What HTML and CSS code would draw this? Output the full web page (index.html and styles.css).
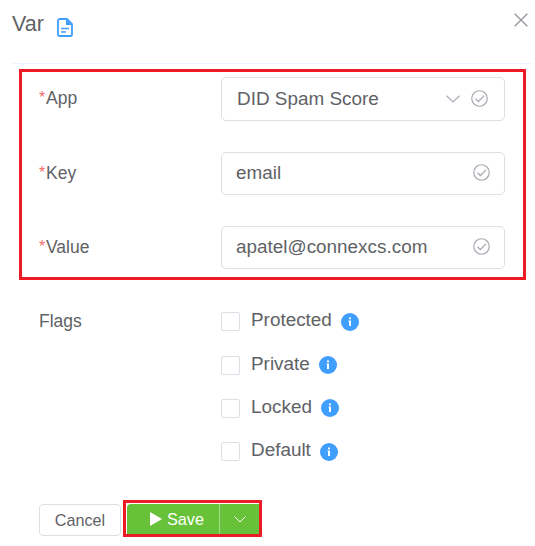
FILE: index.html
```html
<!DOCTYPE html>
<html lang="en">
<head>
<meta charset="utf-8">
<title>Var</title>
<link rel="stylesheet" href="styles.css">
</head>
<body>
<svg class="defs" width="0" height="0">
  <symbol id="check" viewBox="0 0 18 18"><g fill="none" stroke="#a8abb2" stroke-width="1.3"><circle cx="9" cy="9" r="8.2"/><path d="M4.7 9.200 7.800 12.200l6-6"/></g></symbol>
  <symbol id="info" viewBox="0 0 18 18"><circle cx="9" cy="9" r="9" fill="#409eff"/><path fill="#fff" d="M8 4.400h2v1.900H8zM7.500 7.400H10v5.600H8V8.500h-.5z"/></symbol>
</svg>
<main class="dialog">
  <header class="header">
    <h1 class="title">Var</h1>
    <svg class="doc" viewBox="0 0 16 19"><path d="M2.8 1H10l5 5v10.200a1.800 1.800 0 0 1-1.800 1.800H2.800A1.800 1.800 0 0 1 1 16.200V2.800A1.800 1.800 0 0 1 2.800 1z" fill="#fff" stroke="#409eff" stroke-width="1.800"/><path d="M9 1v6H15z" fill="#409eff"/><path d="M4 10.500h8M4 14h5" stroke="#409eff" stroke-width="1.500"/></svg>
    <svg class="close" viewBox="0 0 14 14"><path d="M.7.7l12.600 12.600M13.300.7.7 13.300" stroke="#909399" stroke-width="1.300"/></svg>
  </header>
  <section class="required">
    <div class="row app">
      <label class="label"><span class="star">*</span>App</label>
      <div class="input select"><span>DID Spam Score</span><svg class="chevron" viewBox="0 0 14 8"><path d="M.5.7 7 7l6.500-6.300" fill="none" stroke="#a8abb2" stroke-width="1.200"/></svg><svg class="check"><use href="#check"/></svg></div>
    </div>
    <div class="row">
      <label class="label"><span class="star">*</span>Key</label>
      <div class="input"><span>email</span><svg class="check"><use href="#check"/></svg></div>
    </div>
    <div class="row">
      <label class="label"><span class="star">*</span>Value</label>
      <div class="input"><span>apatel@connexcs.com</span><svg class="check"><use href="#check"/></svg></div>
    </div>
  </section>
  <section class="flags">
    <div class="label">Flags</div>
    <div class="options">
      <label class="option"><span class="box"></span><span class="name">Protected</span><svg class="info"><use href="#info"/></svg></label>
      <label class="option"><span class="box"></span><span class="name">Private</span><svg class="info"><use href="#info"/></svg></label>
      <label class="option"><span class="box"></span><span class="name">Locked</span><svg class="info"><use href="#info"/></svg></label>
      <label class="option"><span class="box"></span><span class="name">Default</span><svg class="info"><use href="#info"/></svg></label>
    </div>
  </section>
  <footer class="footer">
    <button class="cancel">Cancel</button>
    <div class="save-frame">
      <button class="save"><svg class="play" viewBox="0 0 12 14"><path d="M0 0 12 7 0 14z" fill="#fff"/></svg>Save</button>
      <button class="more"><svg viewBox="0 0 12 7"><path d="M.5.5 6 6 11.500.5" fill="none" stroke="#fff"/></svg></button>
    </div>
  </footer>
</main>
</body>
</html>
```
FILE: styles.css
```css
* { box-sizing: border-box; }
body { margin: 0; background: #fff; color: #606266; font-family: "Liberation Sans", Arial, sans-serif; overflow: hidden; }
svg { display: block; flex: none; }
.defs { position: absolute; }
.dialog { width: 535px; height: 546px; }
.header { display: flex; align-items: flex-start; height: 64px; margin: 0 3px 0 12px; border-bottom: 1px solid #ecf5ff; }
.title { margin: 12px 0 0; width: 45px; font-size: 21.5px; line-height: 25px; font-weight: 400; }
.doc { width: 16px; height: 19px; margin-top: 18px; }
.close { width: 14px; height: 14px; margin: 13px 4px 0 auto; }
.required { width: 507px; height: 211px; margin: 5px 0 0 19px; padding: 5px 18px 0 17px; border: 3px solid #ed1c24; }
.row { display: flex; height: 43px; margin-bottom: 31px; }
.row.app { height: 44px; }
.label { width: 182px; font-size: 17.5px; line-height: 42px; }
.star { display: inline-block; width: 7px; color: #f56c6c; font-size: 16px; line-height: 1; transform: translateY(-1px); }
.input { display: flex; align-items: center; width: 284px; padding: 0 14px 2px; border: 1px solid #dcdfe6; border-radius: 5px; font-size: 18.9px; }
.select { padding: 0 16px 1px 15px; }
.check { width: 17px; height: 17px; margin-left: auto; }
.chevron { width: 14px; height: 8px; margin-left: auto; }
.chevron + .check { margin-left: 11px; }
.flags { display: flex; margin: 20px 0 0 39px; height: 174px; }
.option { display: flex; align-items: center; height: 43.4px; }
.box { width: 19px; height: 19px; border: 1px solid #dcdfe6; border-radius: 2px; }
.name { margin: -3px 9px 0 11px; font-size: 18.9px; }
.info { width: 18px; height: 18px; }
.footer { display: flex; margin: 26px 0 0 39px; }
button { display: flex; align-items: center; justify-content: center; padding: 0; border: 0; font: 16.2px "Liberation Sans", Arial, sans-serif; }
.cancel { width: 82px; height: 32px; margin: 4px 2px 0 0; border: 1px solid #dcdfe6; border-radius: 4px; background: #fff; color: #606266; }
.save-frame { display: flex; width: 139px; height: 37px; border: 3px solid #ed1c24; padding: 1px 0 0 1px; }
.save { width: 92px; height: 30px; border-radius: 4px 0 0 0; background: #67c23a; color: #fff; padding-left: 8px; }
.play { width: 12px; height: 14px; margin-right: 5px; }
.more { width: 40px; height: 30px; background: #67c23a; border-left: 1px solid #a4da89; }
.more svg { width: 12px; height: 7px; }
```
